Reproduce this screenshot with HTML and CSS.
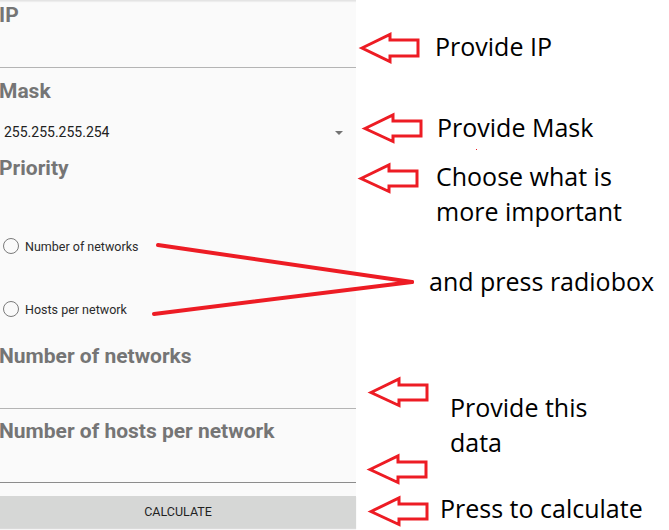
FILE: index.html
```html
<!DOCTYPE html>
<html lang="en">
<head>
<meta charset="utf-8">
<title>Subnet calculator</title>
<link rel="stylesheet" href="styles.css">
</head>
<body>
<div class="page">
  <form class="panel">
    <div class="field field-ip">
      <div class="label">IP</div>
      <div class="input"></div>
    </div>
    <div class="label label-mask">Mask</div>
    <div class="select">
      <span class="select-value">255.255.255.254</span>
      <span class="caret"></span>
    </div>
    <div class="label label-priority">Priority</div>
    <div class="radios">
      <div class="radio"><span class="dot"></span><span class="radio-text">Number of networks</span></div>
      <div class="radio"><span class="dot"></span><span class="radio-text">Hosts per network</span></div>
    </div>
    <div class="field field-nets">
      <div class="label">Number of networks</div>
      <div class="input"></div>
    </div>
    <div class="field field-hosts">
      <div class="label">Number of hosts per network</div>
      <div class="input"></div>
    </div>
    <div class="button">CALCULATE</div>
  </form>

  <div class="notes">
    <svg class="marks" width="669" height="530" viewBox="0 0 669 530">
      <g fill="none" stroke="#ed1c24" stroke-width="3" stroke-linejoin="miter">
        <path d="M362 48 L390 34.5 L390 40 L418 40 L418 56 L390 56 L390 61.5 Z"/>
        <path d="M365 128.5 L393 115 L393 121 L421 121 L421 136 L393 136 L393 141.5 Z"/>
        <path d="M361 178.5 L389 165 L389 171 L417 171 L417 186 L389 186 L389 191.5 Z"/>
        <path d="M371 392.5 L399 379 L399 385 L427 385 L427 400 L399 400 L399 405.5 Z"/>
        <path d="M370 469.5 L398 456 L398 462 L426 462 L426 477 L398 477 L398 482.5 Z"/>
        <path d="M371 511.5 L399 498 L399 504 L427 504 L427 519 L399 519 L399 524.5 Z"/>
      </g>
      <g stroke="#ed1c24" stroke-width="4" stroke-linecap="round" fill="none">
        <path d="M158 245 L412 282"/>
        <path d="M154 314 L412 282"/>
      </g>
      <rect x="476" y="149" width="1" height="1" fill="#ed1c24"/>
    </svg>
    <div class="note note-ip">Provide IP</div>
    <div class="note note-mask">Provide Mask</div>
    <div class="note note-choose">Choose what is<br>more important</div>
    <div class="note note-radio">and press radiobox</div>
    <div class="note note-data">Provide this<br>data</div>
    <div class="note note-calc">Press to calculate</div>
  </div>
</div>
</body>
</html>
```

FILE: styles.css
```css
* { box-sizing: border-box; }
html, body { margin: 0; padding: 0; }
body {
  background: #ffffff;
  width: 669px;
  height: 530px;
  overflow: hidden;
  font-family: Roboto, "Liberation Sans", sans-serif;
}
.page {
  position: relative;
  width: 669px;
  height: 530px;
}
.panel {
  display: flex;
  flex-direction: column;
  width: 356px;
  height: 530px;
  margin: 0;
  background: #fafafa;
  border-top: 1px solid #e4e4e4;
  box-shadow: inset 0 2px 1px -1px #ececec;
}
.panel > * { flex: none; }
.label {
  font-size: 21px;
  line-height: 24px;
  font-weight: 700;
  color: #757575;
  margin-left: -1px;
  white-space: nowrap;
}
.field-ip { padding-top: 2px; }
.input {
  height: 41px;
  border-bottom: 1px solid #b4b4b4;
}
.label-mask { margin-top: 11px; }
.select {
  display: flex;
  align-items: center;
  justify-content: space-between;
  height: 20px;
  margin-top: 19px;
  padding: 0 13px 0 4px;
}
.select-value {
  font-size: 14px;
  color: #212121;
  line-height: 20px;
}
.caret {
  width: 0;
  height: 0;
  border-left: 4px solid transparent;
  border-right: 4px solid transparent;
  border-top: 4px solid #737373;
  margin-top: 1px;
}
.label-priority { margin-top: 14px; }
.radios {
  display: flex;
  flex-direction: column;
  gap: 39px;
  margin-top: 54px;
}
.radio {
  display: flex;
  align-items: center;
  height: 24px;
  gap: 6px;
  padding-left: 3px;
}
.dot {
  width: 16px;
  height: 16px;
  border: 1.5px solid #7a7a7a;
  border-radius: 50%;
  flex: none;
}
.radio-text {
  font-size: 12.5px;
  color: #2b2b2b;
  line-height: 16px;
  margin-top: 2px;
}
.field-nets { margin-top: 23px; }
.field-hosts { margin-top: 10px; }
.field-hosts .input {
  height: 39.5px;
  border-bottom: 1.5px solid #8c8c8c;
}
.button {
  margin-top: 13px;
  height: 32px;
  background: #d6d7d6;
  display: flex;
  align-items: center;
  justify-content: center;
  font-size: 12.5px;
  color: #1f1f1f;
  box-shadow: 0 1px 1px rgba(0,0,0,0.12);
}

/* annotation layer drawn over the screenshot */
.notes {
  position: absolute;
  inset: 0;
  pointer-events: none;
}
.marks {
  position: absolute;
  left: 0;
  top: 0;
}
.note {
  position: absolute;
  font-family: "Open Sans", "Noto Sans", sans-serif;
  font-size: 25px;
  line-height: 35px;
  color: #000000;
  white-space: nowrap;
}
.note-ip { left: 435px; top: 29px; }
.note-mask { left: 437px; top: 110px; }
.note-choose { left: 436px; top: 159px; }
.note-radio { left: 429px; top: 264px; }
.note-data { left: 450px; top: 390px; }
.note-calc { left: 440px; top: 491px; }
```
